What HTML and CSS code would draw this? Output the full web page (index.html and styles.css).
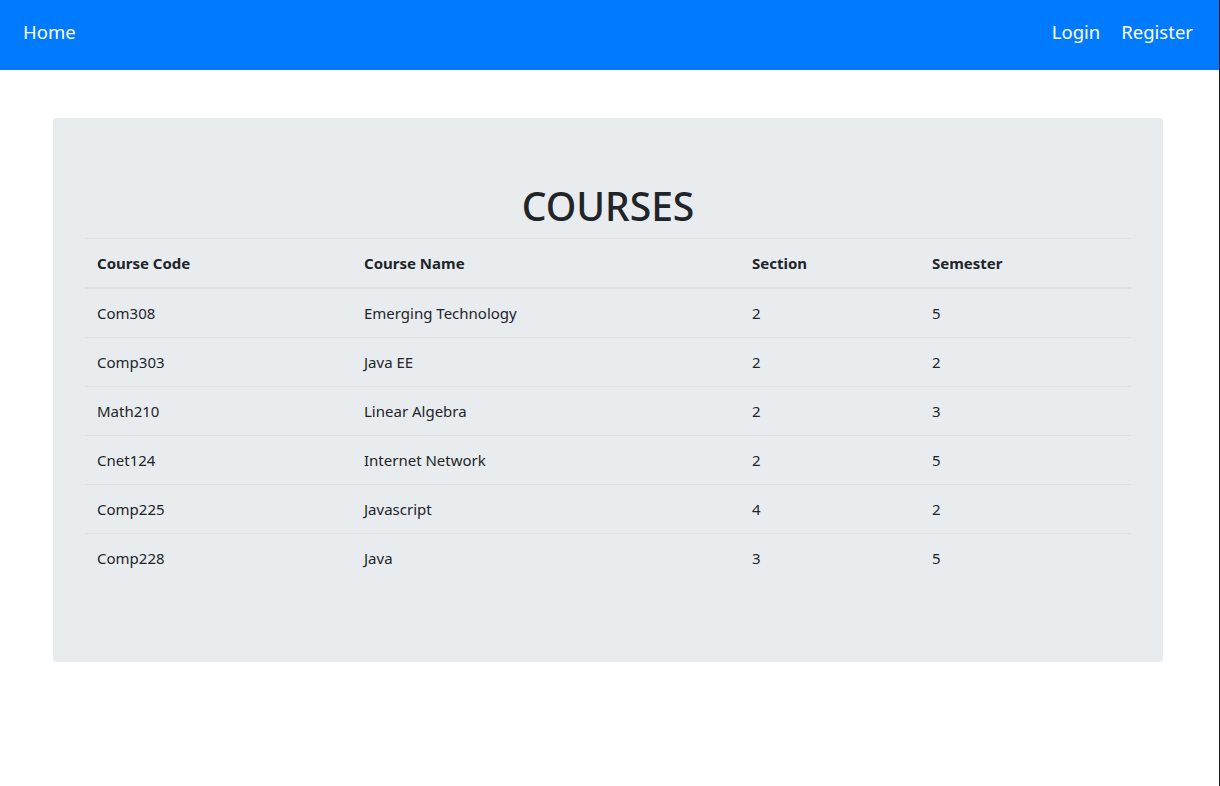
FILE: index.html
```html
<!DOCTYPE html>
<html lang="en">
<head>
<meta charset="utf-8">
<title>Courses</title>
<link rel="stylesheet" href="styles.css">
</head>
<body>
<nav class="navbar">
  <a class="brand" href="#">Home</a>
  <div class="nav-right">
    <a class="nav-link" href="#">Login</a>
    <a class="nav-link" href="#">Register</a>
  </div>
</nav>
<main class="container">
  <section class="jumbotron">
    <h1 class="title">COURSES</h1>
    <table class="table">
      <thead>
        <tr>
          <th class="c1">Course Code</th>
          <th class="c2">Course Name</th>
          <th class="c3">Section</th>
          <th class="c4">Semester</th>
        </tr>
      </thead>
      <tbody>
        <tr><td>Com308</td><td>Emerging Technology</td><td>2</td><td>5</td></tr>
        <tr><td>Comp303</td><td>Java EE</td><td>2</td><td>2</td></tr>
        <tr><td>Math210</td><td>Linear Algebra</td><td>2</td><td>3</td></tr>
        <tr><td>Cnet124</td><td>Internet Network</td><td>2</td><td>5</td></tr>
        <tr><td>Comp225</td><td>Javascript</td><td>4</td><td>2</td></tr>
        <tr><td>Comp228</td><td>Java</td><td>3</td><td>5</td></tr>
      </tbody>
    </table>
  </section>
</main>
<div class="edge"></div>
</body>
</html>
```
FILE: styles.css
```css
* { box-sizing: border-box; }
html, body { margin: 0; padding: 0; }
body {
  font-family: "Noto Sans", "Open Sans", sans-serif;
  font-size: 15px;
  line-height: 24px;
  color: #212529;
  background: #fff;
  width: 1219px;
}
.navbar {
  height: 70px;
  background: #007bff;
  display: flex;
  align-items: flex-start;
  justify-content: space-between;
  padding: 17px 26px 0 23px;
}
.navbar a {
  color: #fff;
  text-decoration: none;
  font-size: 18.5px;
  line-height: 30px;
}
.nav-right { display: flex; gap: 21px; }
.container {
  padding: 48px 56px 0 53px;
}
.jumbotron {
  background: #e9ecef;
  border-radius: 4px;
  padding: 64px 32px 64px;
}
.title {
  margin: 0 0 8px;
  text-align: center;
  font-size: 39px;
  line-height: 48px;
  font-weight: 500;
}
.table {
  width: 100%;
  border-collapse: collapse;
  margin-bottom: 16px;
}
.table th, .table td {
  text-align: left;
  padding: 12px;
  border-top: 1px solid #dee2e6;
  vertical-align: top;
}
.table th { font-weight: 700; border-bottom: 2px solid #dee2e6; }
.c1 { width: 267px; }
.c2 { width: 388px; }
.c3 { width: 180px; }
.edge {
  position: fixed;
  top: 0;
  right: 0;
  width: 1px;
  height: 100%;
  background: #1b1b1b;
}
```
